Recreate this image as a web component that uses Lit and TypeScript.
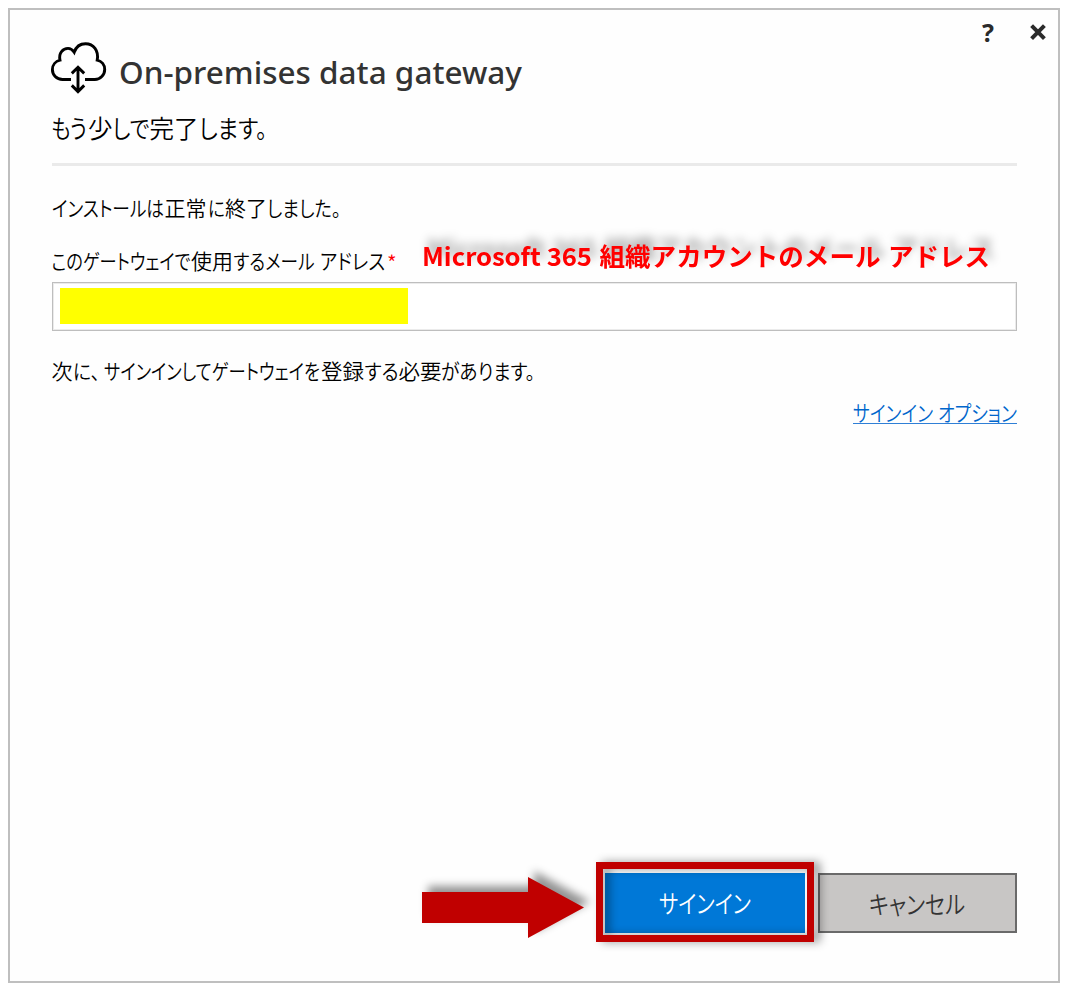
import { LitElement, html, svg, css } from "lit";
import { customElement, property } from "lit/decorators.js";

/** A piece of a line: text, start x and, when it is condensed, the advance it fills. */
type Run = [text: string, x: number, width?: number];

@customElement("ui-line")
class UiLine extends LitElement {
  @property({ attribute: false }) box: number[] = [0, 0, 0, 0];
  @property({ type: Number }) baseline = 0;
  @property({ attribute: false }) runs: Run[] = [];

  static styles = css`
    :host { display: block; }
    svg { display: block; overflow: visible; }
    text { fill: currentColor; font-feature-settings: var(--kana, "palt"); white-space: pre; }
  `;

  render() {
    const [x, y, w, h] = this.box;
    return html`<svg width=${w} height=${h} viewBox="${x} ${y} ${w} ${h}">
      <text y=${this.baseline}>${this.runs.map(([t, rx, rw]) =>
        rw
          ? svg`<tspan x=${rx} textLength=${rw} lengthAdjust="spacingAndGlyphs">${t}</tspan>`
          : svg`<tspan x=${rx}>${t}</tspan>`
      )}</text>
    </svg>`;
  }
}

@customElement("app-root")
class AppRoot extends LitElement {
  static styles = css`
    :host {
      display: block;
      box-sizing: border-box;
      height: 987px;
      padding: 8px 5px 4px 8px;
      background: #fff;
      color: #000;
      font-family: "Noto Sans CJK JP", "Noto Sans", sans-serif;
      font-weight: 350;
    }
    * { box-sizing: border-box; }
    .dialog {
      display: flex;
      flex-direction: column;
      height: 975px;
      border: 2px solid #bfbfbf;
      background: #fefefe;
      padding: 0 41px 38px 42px;
    }
    .bar {
      display: flex;
      justify-content: flex-end;
      height: 32px;
      margin-right: -31px;
      padding-top: 12px;
      gap: 32px;
    }
    .help {
      font: 700 25px/20px "Noto Sans", sans-serif;
      color: #2b2b2b;
      width: 14px;
    }
    .close { width: 20px; height: 20px; }
    .head { display: flex; height: 58px; }
    .cloud { display: block; width: 57px; height: 54px; margin-left: -2px; }
    .title { color: #333; font-family: "Noto Sans", "Open Sans", sans-serif; font-weight: 500; font-size: 31px; }
    .sub { font-size: 24.5px; }
    .rule { height: 3px; background: #eaeaea; flex: none; }
    .body { font-size: 21px; }
    .row { display: flex; }
    .star { color: #f00; font-size: 21px; }
    .note {
      --kana: normal;
      color: #f00;
      font-size: 25.3px;
      font-weight: 700;
      filter: drop-shadow(5px -8px 5px rgba(0, 0, 0, 0.36));
    }
    .field {
      height: 49px;
      flex: none;
      border: 1px solid #bebebe;
      box-shadow: inset 0 0 0 1px #ebebeb;
      background: #fff;
      padding: 5px 7px;
    }
    .mask { width: 348px; height: 36px; background: #ff0; }
    .link { align-self: flex-end; color: #0066cc; font-size: 21.5px; }
    .line { height: 1px; background: #2f7fd6; margin-top: -12px; }
    .space { flex: 1; }
    .foot { display: flex; align-items: center; justify-content: flex-end; height: 80px; }
    .arrow { display: block; margin: 10px 21px 0 0; overflow: visible; filter: drop-shadow(6px -6px 4px rgba(0, 0, 0, 0.42)); }
    .btn { height: 60px; font-size: 25px; }
    .primary { position: relative; width: 200px; margin-right: 13px; background: #0078d7; color: #fff; }
    .frame {
      position: absolute;
      inset: -11px -9px -9px -9px;
      border: 7px solid #c00000;
      filter: drop-shadow(6px 0 5px rgba(0, 0, 0, 0.42));
    }
    .cancel { width: 199px; background: #c8c6c5; color: #333; border: 2px solid #6a6a6a; }
  `;

  render() {
    return html`
      <div class="dialog">
        <div class="bar">
          <div class="help">?</div>
          <svg class="close" viewBox="1028 22 20 20">
            <path d="M1031.6 25.6 1044.4 38.6M1044.4 25.6 1031.6 38.6" stroke="#2b2b2b" stroke-width="4" fill="none" />
          </svg>
        </div>
        <div class="head">
          <svg class="cloud" viewBox="50 42 57 54" fill="none" stroke="#000" stroke-width="2.9">
            <path d="M71 79.5H62.5C56.5 79.5 52.4 75 52.4 69.6C52.4 65 55.5 61.2 60 60.2C58.4 53 63 48.4 68 48.4C70.6 48.4 72.6 49.8 74.2 52.3C76 47 80.3 43.8 85.5 43.8C93.5 43.8 99 50.8 97.2 60.1C101.7 61.2 104.7 65 104.7 69.5C104.7 75 100.3 79.5 94.8 79.5H85" />
            <path d="M78 67.5V91M71.8 73.4 78 67.2 84.2 73.4M71.8 85.4 78 91.6 84.2 85.4" />
          </svg>
          <ui-line class="title" .box=${[107, 42, 420, 58]} .baseline=${83.5} .runs=${[["On-premises data gateway", 119, 403]]}></ui-line>
        </div>
        <ui-line class="sub" .box=${[52, 100, 300, 63]} .baseline=${138}
          .runs=${[["もう", 51, 36], ["少", 88], ["しで", 112.5, 37], ["完了", 149.5, 49], ["します。", 199, 68]]}></ui-line>
        <div class="rule"></div>
        <ui-line class="body" .box=${[52, 166, 400, 69]} .baseline=${216}
          .runs=${[["インストールは", 52, 112], ["正常", 164.5], ["に", 208, 17], ["終了", 225], ["しました。", 267, 74]]}></ui-line>
        <div class="row">
          <ui-line class="body" .box=${[52, 235, 334, 47]} .baseline=${269}
            .runs=${[["このゲートウェイで", 51.5, 139], ["使用", 191, 42], ["するメール", 233.5, 81], ["アドレス", 320, 65]]}></ui-line>
          <ui-line class="star" .box=${[386, 235, 37, 47]} .baseline=${271} .runs=${[["*", 387]]}></ui-line>
          <ui-line class="note" .box=${[423, 235, 570, 47]} .baseline=${265.5}
            .runs=${[["Microsoft 365", 422, 170], ["組織アカウントのメール", 599.5, 281], ["アドレス", 888, 102]]}></ui-line>
        </div>
        <div class="field"><div class="mask"></div></div>
        <ui-line class="body" .box=${[52, 331, 500, 64]} .baseline=${378.5}
          .runs=${[["次", 51.5], ["に、", 73, 27], ["サインインしてゲートウェイを", 104, 216], ["登録", 321, 43], ["する", 364.5, 34], ["必要", 398.5, 43], ["があります。", 441, 94]]}></ui-line>
        <div class="link">
          <ui-line .box=${[853, 395, 164, 40]} .baseline=${420.5} .runs=${[["サインイン", 853, 80], ["オプション", 938, 79]]}></ui-line>
          <div class="line"></div>
        </div>
        <div class="space"></div>
        <div class="foot">
          <svg class="arrow" width="162" height="62" viewBox="422 877 162 62">
            <path fill="#c00000" d="M422 892H528V877L584 907.500L528 938V923H422Z" />
          </svg>
          <div class="btn primary">
            <ui-line .box=${[605, 873, 200, 60]} .baseline=${913} .runs=${[["サインイン", 659, 92]]}></ui-line>
            <div class="frame"></div>
          </div>
          <div class="btn cancel">
            <ui-line .box=${[820, 875, 190, 50]} .baseline=${913.5} .runs=${[["キャンセル", 869, 96]]}></ui-line>
          </div>
        </div>
      </div>
    `;
  }
}
